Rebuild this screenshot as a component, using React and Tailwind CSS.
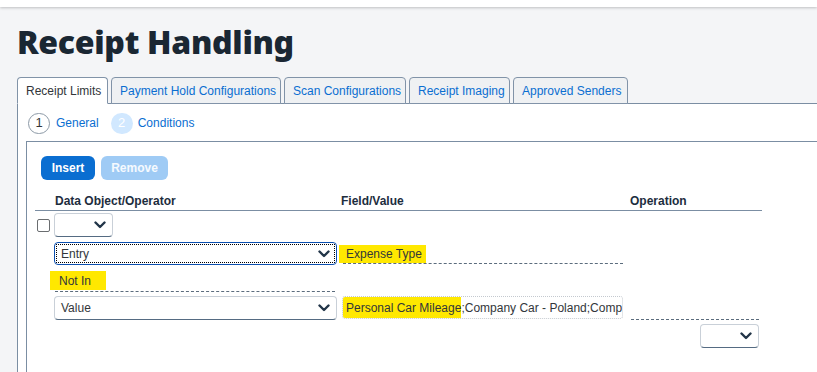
import React from 'react';

const Chevron = () => (
  <svg width="12" height="8" viewBox="0 0 12 8" className="shrink-0">
    <path d="M1.5 1.5 L6 6 L10.5 1.5" fill="none" stroke="#223548" strokeWidth="2.4" strokeLinecap="round" strokeLinejoin="round" />
  </svg>
);

function Select({ value, width, focused }) {
  if (focused) {
    return (
      <div className={`${width} h-[23px] rounded-[4px] border border-[#0b4fb0] p-[1px] bg-white`}>
        <div className="h-full border border-dotted border-black flex items-center justify-between pl-[4px] pr-[4px]">
          <span className="text-[12px] text-[#32363a]">{value}</span>
          <Chevron />
        </div>
      </div>
    );
  }
  return (
    <div className={`${width} h-[24px] rounded-[4px] border border-[#c9d0d8] border-b-[#556b82] bg-white flex items-center justify-between pl-[6px] pr-[6px]`}>
      <span className="text-[12px] text-[#32363a]">{value}</span>
      <Chevron />
    </div>
  );
}

export default function App() {
  const tabs = [
    { label: 'Receipt Limits', w: 'w-[91px]', active: true },
    { label: 'Payment Hold Configurations', w: 'w-[170px]' },
    { label: 'Scan Configurations', w: 'w-[122px]' },
    { label: 'Receipt Imaging', w: 'w-[101px]' },
    { label: 'Approved Senders', w: 'w-[115px]' },
  ];

  return (
    <div className="w-[817px] h-[372px] overflow-hidden bg-[#f4f5f7] flex flex-col" style={{ fontFamily: '"Liberation Sans", Arial, sans-serif' }}>
      {/* shell bar */}
      <div className="h-[7px] shrink-0 bg-white shadow-[0_1px_3px_rgba(0,0,0,0.22)] relative z-10" />

      {/* title */}
      <h1 className="pl-[17px] mt-[19px] text-[32px] leading-[32px] font-black text-[#1a2733] tracking-[-0.3px] font-['Noto_Sans',sans-serif]">
        Receipt Handling
      </h1>

      {/* tabs */}
      <div className="flex items-end gap-[3px] pl-[17px] mt-[19px] relative z-10 -mb-px">
        {tabs.map((t) => (
          <div
            key={t.label}
            className={`${t.w} h-[27px] flex items-center pl-[8px] text-[12px] whitespace-nowrap rounded-t-[4px] border border-[#8193a8] ${
              t.active ? 'bg-white border-b-white text-[#32363a]' : 'bg-[#eff1f3] text-[#0a6ed1]'
            }`}
          >
            {t.label}
          </div>
        ))}
      </div>

      {/* content panel */}
      <div className="flex-1 ml-[17px] bg-white border-l border-t border-[#7b8ea3] flex flex-col">
        {/* wizard steps */}
        <div className="flex items-center h-[37px] pl-[10px] pt-[1px]">
          <div className="w-[22px] h-[21px] rounded-full border border-[#8c99a6] flex items-center justify-center text-[13px] text-[#32363a]">1</div>
          <span className="ml-[6px] text-[12px] text-[#0a6ed1]">General</span>
          <div className="ml-[12px] w-[22px] h-[21px] rounded-full bg-[#d1e8ff] flex items-center justify-center text-[13px] text-white">2</div>
          <span className="ml-[5px] text-[12px] text-[#0a6ed1]">Conditions</span>
        </div>

        {/* inner panel */}
        <div className="flex-1 ml-[8px] border-l border-t border-[#7b8ea3] pl-[8px] pt-[14px]">
          <div className="flex gap-[6px] pl-[6px]">
            <button className="w-[54px] h-[24px] rounded-[6px] bg-[#0a6ed1] text-white text-[12px] font-bold">Insert</button>
            <button className="w-[67px] h-[24px] rounded-[6px] bg-[#9fcbf5] text-white/90 text-[12px] font-bold">Remove</button>
          </div>

          {/* table */}
          <div className="w-[727px] mt-[12px]">
            <div className="grid grid-cols-[19px_285px_288px_1fr] h-[19px] items-center border-b border-[#7b8ea3] text-[12px] font-bold text-[#1d2d3e]">
              <div />
              <div className="pl-[1px]">Data Object/Operator</div>
              <div className="pl-[2px]">Field/Value</div>
              <div className="pl-[3px]">Operation</div>
            </div>

            {/* row 1 */}
            <div className="grid grid-cols-[19px_285px_288px_1fr] mt-[2px] items-center">
              <div className="flex items-center pl-[2px]">
                <div className="w-[13px] h-[13px] rounded-[2px] border border-[#6a6d70] bg-white" />
              </div>
              <Select value="" width="w-[59px]" />
            </div>

            {/* row 2 */}
            <div className="grid grid-cols-[19px_285px_288px_1fr] mt-[5px] items-start">
              <div />
              <Select value="Entry" width="w-[283px]" focused />
              <div className="flex flex-col pt-[3px]">
                <div className="w-[87px] h-[18px] bg-[#ffe800] flex items-center pl-[7px] text-[12px] text-[#32363a]">Expense Type</div>
                <div className="ml-[4px] w-[280px] border-b border-dashed border-[#5b6c7d]" />
              </div>
            </div>

            {/* row 3 */}
            <div className="grid grid-cols-[15px_289px_288px_1fr] mt-[6px]">
              <div />
              <div className="flex flex-col">
                <div className="w-[56px] h-[19px] bg-[#ffe800] flex items-center pl-[9px] text-[12px] text-[#32363a]">Not In</div>
                <div className="mt-[1px] ml-[5px] w-[280px] border-b border-dashed border-[#5b6c7d]" />
              </div>
            </div>

            {/* row 4 */}
            <div className="grid grid-cols-[19px_288px_289px_1fr] mt-[4px] items-start">
              <div />
              <Select value="Value" width="w-[283px]" />
              <div className="w-[281px] h-[23px] border border-dotted border-[#c4c9cf] rounded-[3px] overflow-hidden whitespace-nowrap flex items-stretch text-[12px] text-[#32363a]">
                <span className="bg-[#ffe800] pl-[3px] flex items-center">Personal Car Mileage</span>
                <span className="flex items-center">;Company Car - Poland;Company Car - Germany</span>
              </div>
              <div className="h-[24px] flex items-end">
                <div className="w-[128px] border-b border-dashed border-[#5b6c7d]" />
              </div>
            </div>

            {/* row 5 */}
            <div className="flex justify-end pr-[3px] mt-[4px]">
              <Select value="" width="w-[59px]" />
            </div>
          </div>
        </div>
      </div>
    </div>
  );
}
